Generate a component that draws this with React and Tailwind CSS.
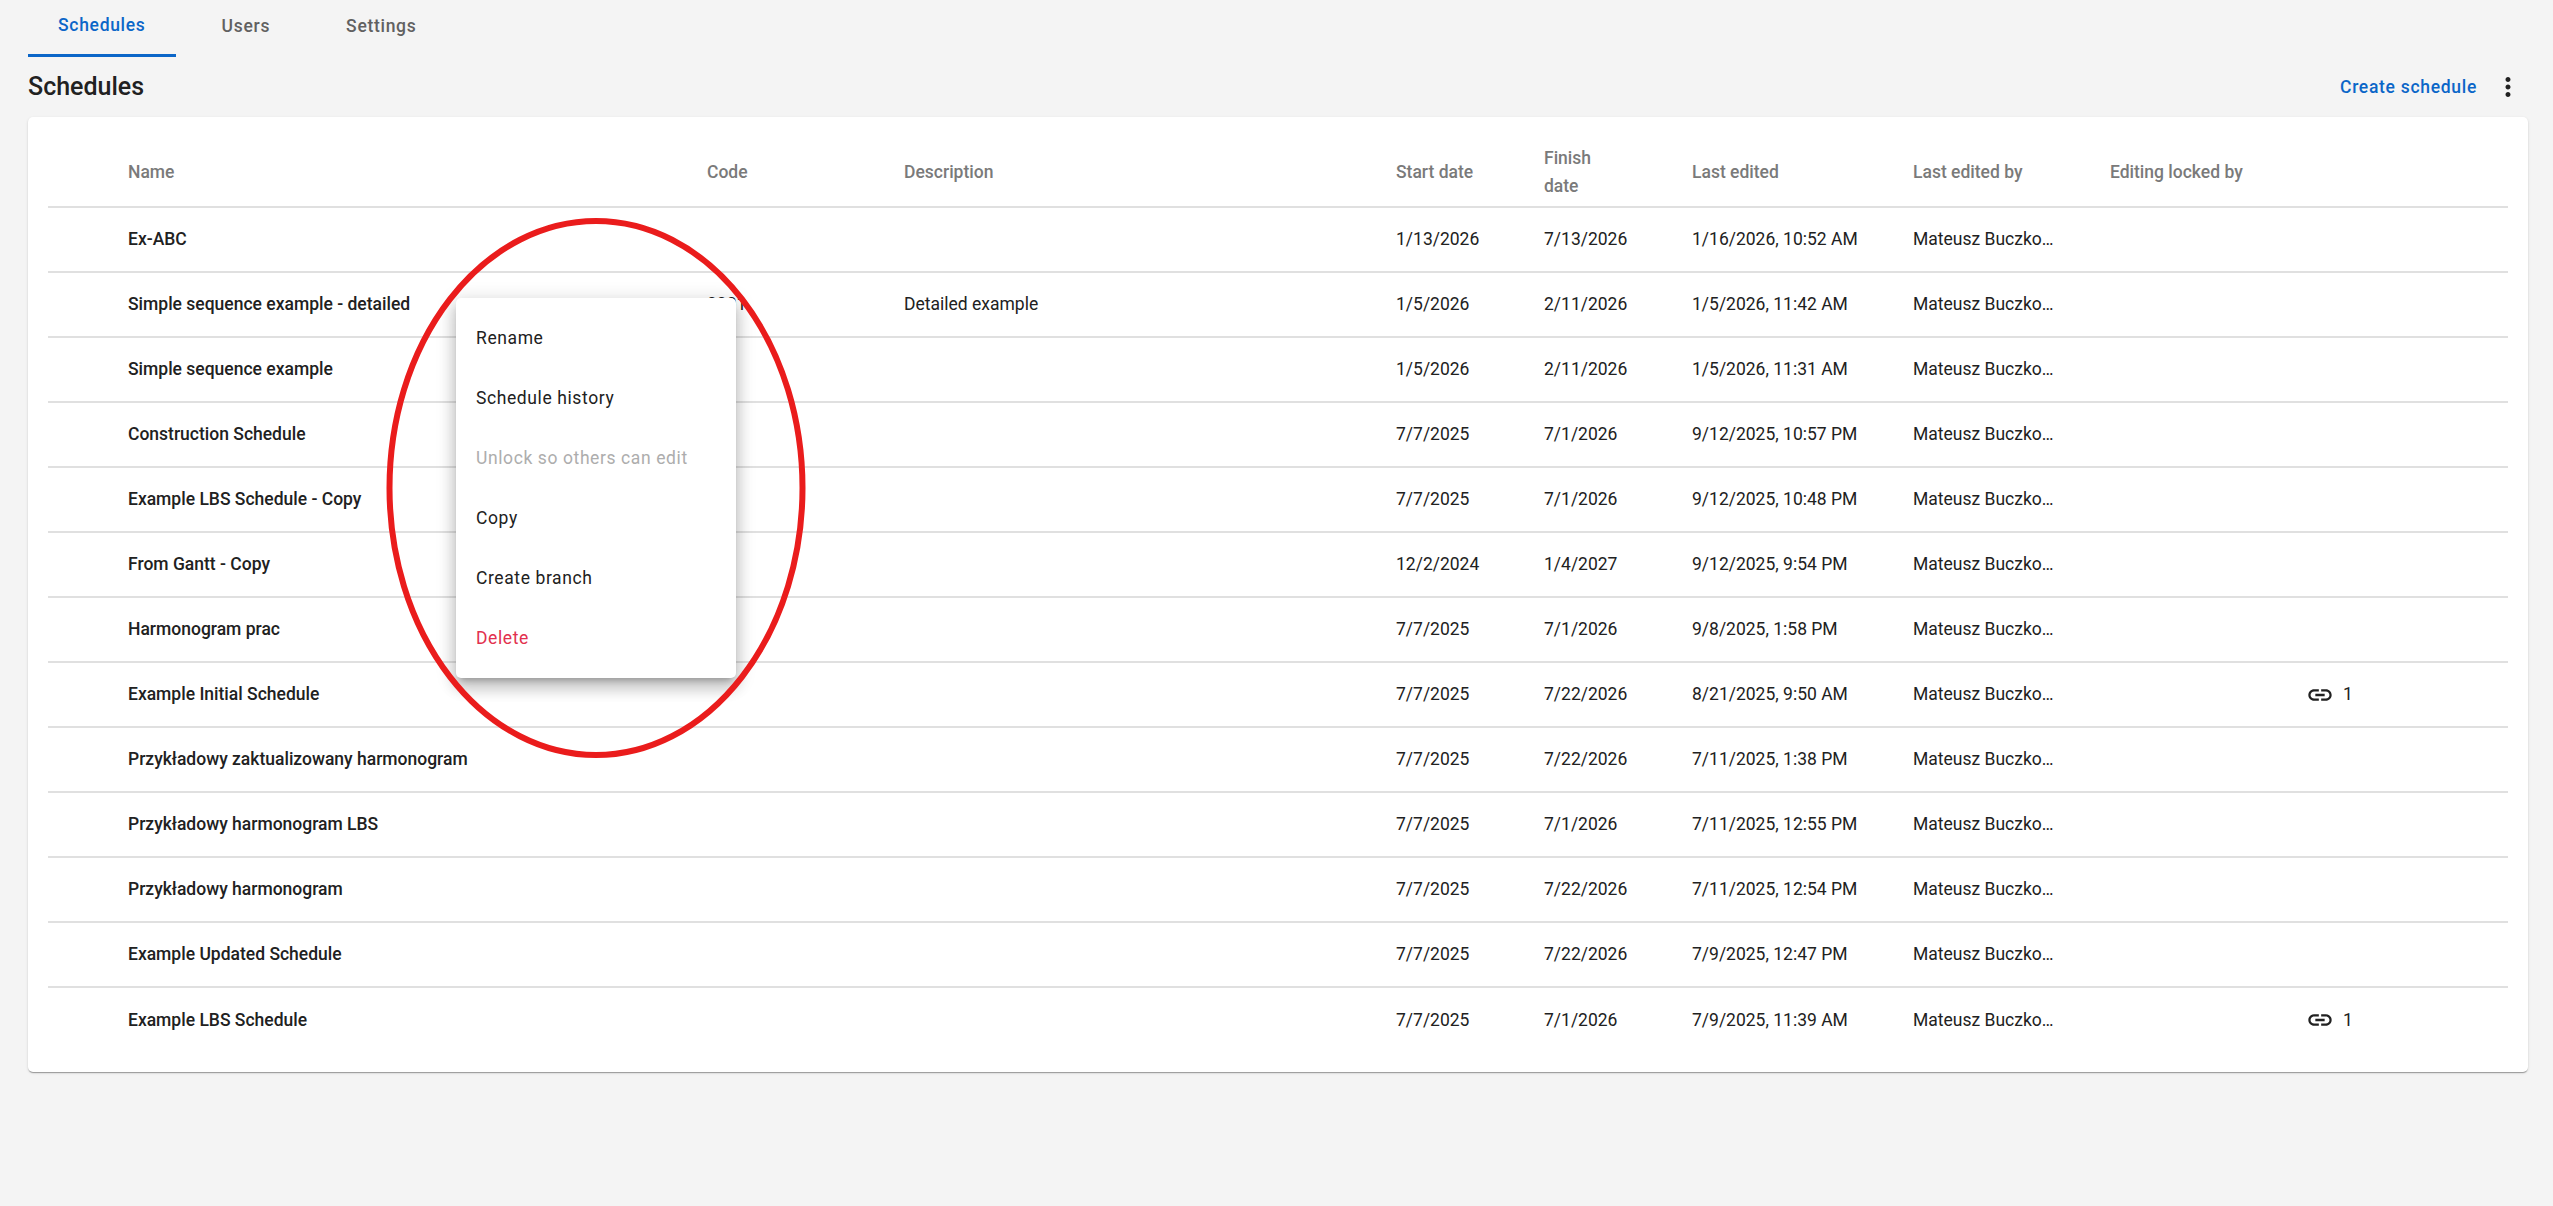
const schedules = [
  { name: 'Ex-ABC', start: '1/13/2026', finish: '7/13/2026', edited: '1/16/2026, 10:52 AM' },
  { name: 'Simple sequence example - detailed', code: '0001', description: 'Detailed example', start: '1/5/2026', finish: '2/11/2026', edited: '1/5/2026, 11:42 AM' },
  { name: 'Simple sequence example', start: '1/5/2026', finish: '2/11/2026', edited: '1/5/2026, 11:31 AM' },
  { name: 'Construction Schedule', start: '7/7/2025', finish: '7/1/2026', edited: '9/12/2025, 10:57 PM' },
  { name: 'Example LBS Schedule - Copy', start: '7/7/2025', finish: '7/1/2026', edited: '9/12/2025, 10:48 PM' },
  { name: 'From Gantt - Copy', start: '12/2/2024', finish: '1/4/2027', edited: '9/12/2025, 9:54 PM' },
  { name: 'Harmonogram prac', start: '7/7/2025', finish: '7/1/2026', edited: '9/8/2025, 1:58 PM' },
  { name: 'Example Initial Schedule', start: '7/7/2025', finish: '7/22/2026', edited: '8/21/2025, 9:50 AM', links: 1 },
  { name: 'Przykładowy zaktualizowany harmonogram', start: '7/7/2025', finish: '7/22/2026', edited: '7/11/2025, 1:38 PM' },
  { name: 'Przykładowy harmonogram LBS', start: '7/7/2025', finish: '7/1/2026', edited: '7/11/2025, 12:55 PM' },
  { name: 'Przykładowy harmonogram', start: '7/7/2025', finish: '7/22/2026', edited: '7/11/2025, 12:54 PM' },
  { name: 'Example Updated Schedule', start: '7/7/2025', finish: '7/22/2026', edited: '7/9/2025, 12:47 PM' },
  { name: 'Example LBS Schedule', start: '7/7/2025', finish: '7/1/2026', edited: '7/9/2025, 11:39 AM', links: 1 },
];

const menuItems = [
  { label: 'Rename', className: 'text-[#212121]' },
  { label: 'Schedule history', className: 'text-[#212121]' },
  { label: 'Unlock so others can edit', className: 'text-[#adadad]' },
  { label: 'Copy', className: 'text-[#212121]' },
  { label: 'Create branch', className: 'text-[#212121]' },
  { label: 'Delete', className: 'text-[#e2304e]' },
];

function MoreIcon() {
  return (
    <svg viewBox="0 0 24 24" className="w-[30px] h-[30px] fill-[#212121]">
      <path d="M12 8c1.1 0 2-.9 2-2s-.9-2-2-2-2 .9-2 2 .9 2 2 2zm0 2c-1.1 0-2 .9-2 2s.9 2 2 2 2-.9 2-2-.9-2-2-2zm0 6c-1.1 0-2 .9-2 2s.9 2 2 2 2-.9 2-2-.9-2-2-2z" />
    </svg>
  );
}

function LinkIcon() {
  return (
    <svg viewBox="0 0 24 24" className="w-[28px] h-[28px] fill-[#212121] -ml-[2px]">
      <path d="M3.9 12c0-1.71 1.39-3.1 3.1-3.1h4V7H7c-2.76 0-5 2.24-5 5s2.24 5 5 5h4v-1.9H7c-1.71 0-3.1-1.39-3.1-3.1zM8 13h8v-2H8v2zm9-6h-4v1.9h4c1.71 0 3.1 1.39 3.1 3.1s-1.39 3.1-3.1 3.1h-4V17h4c2.76 0 5-2.24 5-5s-2.24-5-5-5z" />
    </svg>
  );
}

export default function App() {
  return (
    <div className="relative min-h-screen bg-[#f4f4f4] font-['Roboto',sans-serif] overflow-hidden">
      <nav className="flex gap-4 pl-[28px] h-[57px]">
        <div className="h-[57px] px-[30px] flex items-center pb-[4px] border-b-[3px] border-[#0b66c8] text-[#0b66c8] text-[17.5px] font-medium tracking-[0.7px]">Schedules</div>
        <div className="h-[57px] px-[30px] flex items-center pb-[4px] text-[#616161] text-[17.5px] font-medium tracking-[0.7px]">Users</div>
        <div className="h-[57px] px-[30px] flex items-center pb-[4px] text-[#616161] text-[17.5px] font-medium tracking-[0.7px]">Settings</div>
      </nav>

      <div className="h-[60px] pl-[28px] pr-[30px] flex items-center justify-between">
        <h1 className="text-[25px] font-medium text-[#212121]">Schedules</h1>
        <div className="flex items-center gap-[16px]">
          <span className="text-[#0b66c8] text-[17.5px] font-medium tracking-[0.7px]">Create schedule</span>
          <MoreIcon />
        </div>
      </div>

      <div className="mx-[28px] w-[2500px] h-[955px] pt-[20px] px-[20px] bg-white rounded-[5px] shadow-[0_2px_1px_-1px_rgba(0,0,0,0.2),0_1px_1px_0_rgba(0,0,0,0.14),0_1px_3px_0_rgba(0,0,0,0.12)]">
        <table className="table-fixed w-[2460px] border-collapse text-left text-[17.5px]">
          <colgroup>
            <col className="w-[80px]" />
            <col className="w-[579px]" />
            <col className="w-[197px]" />
            <col className="w-[492px]" />
            <col className="w-[148px]" />
            <col className="w-[148px]" />
            <col className="w-[221px]" />
            <col className="w-[197px]" />
            <col className="w-[198px]" />
            <col className="w-[200px]" />
          </colgroup>
          <thead>
            <tr className="h-[70px] border-b-2 border-[#e0e0e0] text-[#7a7a7a] font-medium leading-[28px]">
              <th className="font-medium"></th>
              <th className="font-medium">Name</th>
              <th className="font-medium">Code</th>
              <th className="font-medium">Description</th>
              <th className="font-medium">Start date</th>
              <th className="font-medium">Finish<br />date</th>
              <th className="font-medium">Last edited</th>
              <th className="font-medium">Last edited by</th>
              <th className="font-medium">Editing locked by</th>
              <th className="font-medium"></th>
            </tr>
          </thead>
          <tbody className="text-[#212121]">
            {schedules.map((s) => (
              <tr key={s.name} className="h-[65px] border-b-2 border-[#e0e0e0] last:border-b-0">
                <td></td>
                <td className="font-medium whitespace-nowrap">{s.name}</td>
                <td>{s.code}</td>
                <td>{s.description}</td>
                <td>{s.start}</td>
                <td>{s.finish}</td>
                <td className="whitespace-nowrap">{s.edited}</td>
                <td><div className="w-[146px] truncate">Mateusz Buczkowski</div></td>
                <td></td>
                <td>
                  {s.links && (
                    <div className="flex items-center gap-[9px]">
                      <LinkIcon />
                      <span>{s.links}</span>
                    </div>
                  )}
                </td>
              </tr>
            ))}
          </tbody>
        </table>
      </div>

      <div className="absolute left-[456px] top-[298px] w-[280px] py-[10px] bg-white rounded-[5px] shadow-[0_6px_6px_-4px_rgba(0,0,0,0.25),0_10px_14px_2px_rgba(0,0,0,0.14),0_4px_18px_4px_rgba(0,0,0,0.12)]">
        {menuItems.map((item) => (
          <div key={item.label} className={`h-[60px] pl-[20px] flex items-center whitespace-nowrap text-[17.5px] tracking-[0.6px] ${item.className}`}>
            {item.label}
          </div>
        ))}
      </div>

      <svg className="absolute left-[380px] top-[212px] w-[432px] h-[552px] pointer-events-none" viewBox="0 0 432 552">
        <ellipse cx="216" cy="276" rx="206.5" ry="267" fill="none" stroke="#ea1c1c" strokeWidth="6" />
      </svg>
    </div>
  );
}
